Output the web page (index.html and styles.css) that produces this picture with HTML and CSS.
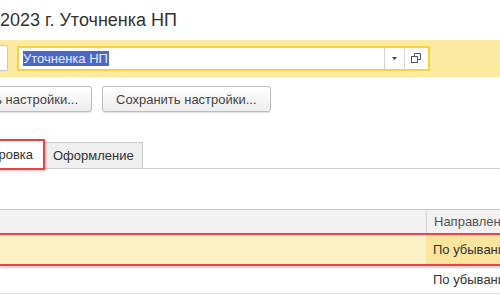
FILE: index.html
```html
<!DOCTYPE html>
<html>
<head>
    <title>Уточненка НП</title>
    <link rel="stylesheet" href="styles.css">
</head>
<body>
    <h1 class="title">2023 г. Уточненка НП</h1>

    <div class="toolbar">
        <div class="clip clip-box">
            <div class="left-box"></div>
        </div>
        <div class="field">
            <div class="field-text"><span class="selected-text">Уточненка НП</span></div>
            <div class="field-btn">
                <svg width="7" height="4" viewBox="0 0 7 4"><path d="M1 0h5l-2.5 3z" fill="#444"/></svg>
            </div>
            <div class="field-btn field-btn-wide">
                <svg width="11" height="11" viewBox="0 0 11 11">
                    <rect x="0.5" y="3.5" width="6" height="6" fill="#fff" stroke="#555"/>
                    <path d="M3.5 3.5v-3h6v6h-3" fill="none" stroke="#555"/>
                </svg>
            </div>
        </div>
    </div>

    <div class="buttons">
        <div class="clip clip-btn">
            <button class="btn">Восстановить настройки...</button>
        </div>
        <button class="btn">Сохранить настройки...</button>
    </div>

    <div class="tabs">
        <div class="clip clip-tab">
            <div class="tab tab-active">Сортировка</div>
        </div>
        <div class="tab tab-plain">Оформление</div>
    </div>

    <div class="grid">
        <div class="grid-row grid-head">
            <div class="cell cell-main"></div>
            <div class="cell cell-dir">Направление</div>
        </div>
        <div class="grid-row grid-selected">
            <div class="cell cell-main"></div>
            <div class="cell cell-dir cell-current">По убыванию</div>
        </div>
        <div class="grid-row">
            <div class="cell cell-main"></div>
            <div class="cell cell-dir">По убыванию</div>
        </div>
    </div>
</body>
</html>
```

FILE: styles.css
```css
body {
    font-family: Arial, 'Liberation Sans', sans-serif;
    font-size: 13px;
    color: #333;
    background-color: #fff;
    margin: 0;
    padding: 0;
    width: 500px;
    height: 300px;
    overflow: hidden;
}

.title {
    margin: 0;
    padding: 10px 0 9px 0;
    font-size: 18px;
    font-weight: normal;
    line-height: 21px;
    white-space: nowrap;
    color: #333;
}

/* clipped items run off the left edge */
.clip {
    display: flex;
    justify-content: flex-end;
    flex-shrink: 0;
}

.toolbar {
    display: flex;
    align-items: flex-start;
    height: 37px;
    padding-top: 5px;
    box-sizing: border-box;
    background-color: #fbeaa0;
}

.clip-box {
    width: 8px;
}

.left-box {
    flex-shrink: 0;
    width: 40px;
    height: 26px;
    box-sizing: border-box;
    background-color: #fff;
    border: 1px solid #c9c9c9;
    border-radius: 2px;
}

.field {
    display: flex;
    margin-left: 9px;
    margin-top: 1px;
    width: 413px;
    height: 25px;
    box-sizing: border-box;
    border: 2px solid #f7d240;
    background-color: #fff;
}

.field-text {
    flex: 1;
    padding: 3px 0 0 4px;
}

.selected-text {
    display: inline-block;
    height: 15px;
    line-height: 15px;
    padding-right: 1px;
    background-color: #4a67c4;
    color: #e6ecff;
}

.field-btn {
    display: flex;
    align-items: center;
    justify-content: center;
    width: 19px;
    border-left: 1px solid #d2d2d2;
}

.field-btn-wide {
    width: 23px;
}

.buttons {
    display: flex;
    gap: 10px;
    margin-top: 9px;
}

.clip-btn {
    width: 92px;
}

.btn {
    flex-shrink: 0;
    height: 26px;
    padding: 0 13px;
    font-family: Arial, 'Liberation Sans', sans-serif;
    font-size: 13px;
    color: #444;
    white-space: nowrap;
    border: 1px solid #bcbcbc;
    border-radius: 3px;
    background: linear-gradient(#ffffff, #ededed);
    box-shadow: 0 1px 1px rgba(0, 0, 0, 0.12);
}

.tabs {
    display: flex;
    align-items: flex-end;
    height: 29px;
    margin-top: 27px;
    border-bottom: 1px solid #cccccc;
}

.clip-tab {
    width: 45px;
    align-self: flex-end;
}

.tab {
    flex-shrink: 0;
    height: 26px;
    line-height: 25px;
    box-sizing: border-box;
    border: 1px solid #cccccc;
    border-bottom: none;
    background-color: #efefef;
    color: #333;
    white-space: nowrap;
}

.tab-plain {
    width: 99px;
    margin-left: -1px;
    padding-left: 8px;
}

.tab-active {
    height: 31px;
    line-height: 27px;
    margin-bottom: -2px;
    padding: 0 10px 0 16px;
    background-color: #fff;
    border: 2px solid #e8434a;
    box-shadow: 1px 1px 2px rgba(0, 0, 0, 0.25);
    position: relative;
    z-index: 1;
}

.grid {
    margin-top: 40px;
}

.grid-row {
    display: flex;
    height: 27px;
    border-bottom: 1px solid #e4e4e4;
}

.grid-head {
    height: 23px;
    background-color: #f2f2f2;
    border-top: 1px solid #cbcbcb;
    border-bottom: none;
}

.grid-selected {
    height: 29px;
    background-color: #fdf1c6;
    border-top: 2px solid #f0404a;
    border-bottom: 2px solid #f0404a;
    box-shadow: 0 2px 2px rgba(0, 0, 0, 0.2);
    position: relative;
}

.cell {
    display: flex;
    align-items: center;
    white-space: nowrap;
    overflow: hidden;
}

.cell-main {
    width: 426px;
    flex-shrink: 0;
}

.cell-dir {
    flex: 1;
    padding-left: 7px;
    color: #333;
}

.grid-head .cell-dir {
    border-left: 1px solid #d4d4d4;
    color: #555;
}

.cell-current {
    background-color: #fbe49c;
}
```
